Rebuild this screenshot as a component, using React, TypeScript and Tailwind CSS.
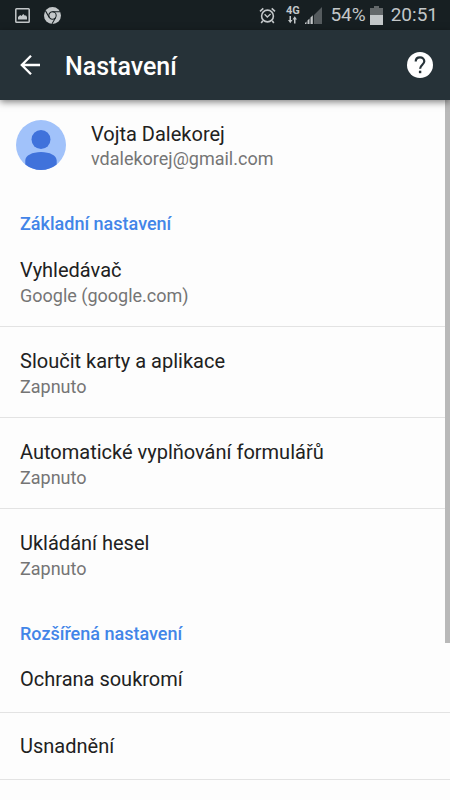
import type { ReactNode } from "react";

type Item = { title: string; value?: string };

const basicItems: Item[] = [
  { title: "Vyhledávač", value: "Google (google.com)" },
  { title: "Sloučit karty a aplikace", value: "Zapnuto" },
  { title: "Automatické vyplňování formulářů", value: "Zapnuto" },
  { title: "Ukládání hesel", value: "Zapnuto" },
];

const advancedItems: Item[] = [
  { title: "Ochrana soukromí" },
  { title: "Usnadnění" },
];

function StatusBar() {
  return (
    <div className="flex h-[30px] items-center bg-[#171f22] pl-[15px] pr-3 text-[19px] leading-[30px] text-[#c3c7c9]">
      <svg className="size-[15px]" viewBox="0 0 15 15" fill="none">
        <rect x="0.8" y="0.8" width="13.4" height="13.4" rx="0.8" stroke="currentColor" strokeWidth="1.500" />
        <path d="M3 11.500V9l2.200-2 1.300 1 1.700-2L10 7.800l.9-.6L12 9v2.500z" fill="currentColor" />
      </svg>
      <svg className="ml-[14px] size-[17px]" viewBox="0 0 18 18">
        <circle cx="9" cy="9" r="9" fill="#c3c7c9" />
        <g stroke="#171f22" strokeWidth="1.1" fill="none">
          <circle cx="9" cy="9" r="3.900" />
          <path d="M9 5.100h8.200M5.600 11 1.600 4.100M12.400 11 8.400 17.900" />
        </g>
      </svg>

      <svg className="ml-auto size-[17px]" viewBox="0 0 17 17" fill="none" stroke="currentColor" strokeWidth="1.6">
        <circle cx="8.500" cy="9" r="5.900" />
        <path d="M1 4.300 4.300 1.300M16 4.300l-3.300-3M3.800 13.800 2.200 16M13.200 13.800l1.600 2.200" />
        <path d="M5.600 7.200 8.300 10l3.300-3" strokeWidth="1.3" />
      </svg>
      <div className="ml-[9px] flex w-[15px] flex-col items-center">
        <span className="text-[11px] font-bold leading-[10px]">4G</span>
        <svg className="h-[8px] w-[9px]" viewBox="0 0 9 8" fill="currentColor">
          <path d="M1.500 0h1.500v4h1.500L2.250 7.200 0 4h1.500zM6 7.500h1.500v-4H9L6.750.3 4.500 3.500H6z" />
        </svg>
      </div>
      <svg className="ml-[5px] size-[17px]" viewBox="0 0 17 17">
        <path d="M9 8l8-8v17H9z" fill="#555b5e" />
        <path d="M0 17v-1l1.500-1.500V17zM2.500 17v-3.500L4.500 11.500V17zM5.500 17v-6.500L7.800 8.200V17z" fill="#c3c7c9" />
      </svg>
      <span className="ml-2">54%</span>
      <svg className="ml-[4px] h-[19px] w-[13px]" viewBox="0 0 13 19">
        <path d="M4 0h5v2h4v7H0V2h4z" fill="#63686a" />
        <path d="M0 9h13v10H0z" fill="#c3c7c9" />
      </svg>
      <span className="ml-2">20:51</span>
    </div>
  );
}

function Header() {
  return (
    <header className="relative z-10 flex h-[70px] items-center bg-[#263238] pl-5 pr-[17px] text-white shadow-[0_2px_7px_rgba(0,0,0,0.5)]">
      <button type="button" aria-label="Zpět">
        <svg className="size-5" viewBox="0 0 20 20" fill="none" stroke="currentColor" strokeWidth="2.300">
          <path d="M20 10H2M11 .8 1.800 10l9.200 9.200" />
        </svg>
      </button>
      <h1 className="ml-[25px] pt-1 text-[25px] font-medium leading-8">Nastavení</h1>
      <button type="button" aria-label="Nápověda" className="ml-auto">
        <svg className="size-[26px]" viewBox="0 0 26 26" fill="none">
          <circle cx="13" cy="13" r="13" fill="currentColor" />
          <path
            d="M8.700 9.600C8.700 7 10.500 5.300 13 5.300s4.300 1.700 4.300 4c0 3.300-4.200 3.600-4.200 7.500"
            stroke="#263238"
            strokeWidth="2.200"
          />
          <path d="M11.900 18.700h2.400v2.500h-2.400z" fill="#263238" />
        </svg>
      </button>
    </header>
  );
}

function Account() {
  return (
    <button type="button" className="flex w-full items-center px-4 py-5 text-left">
      <svg className="size-[50px]" viewBox="0 0 50 50">
        <circle cx="25" cy="25" r="25" fill="#a1c2fa" />
        <circle cx="25" cy="19.500" r="9.500" fill="#4072db" />
        <path d="M9.300 44.500v-4c0-5 7-8.500 15.700-8.500s15.700 3.500 15.700 8.500v4A25 25 0 0 1 25 50a25 25 0 0 1-15.700-5.500z" fill="#4072db" />
      </svg>
      <span className="ml-[25px] flex flex-col">
        <span className="text-[20px] leading-7 text-[#212121]">Vojta Dalekorej</span>
        <span className="text-[18px] leading-[22px] text-[#757575]">vdalekorej@gmail.com</span>
      </span>
    </button>
  );
}

function Section({ label, children }: { label: string; children: ReactNode }) {
  return (
    <section>
      <h2 className="px-5 pt-[22px] text-[18px] font-medium leading-6 text-[#4285e8]">{label}</h2>
      <ul>{children}</ul>
    </section>
  );
}

function Row({ title, value, divider }: Item & { divider: boolean }) {
  return (
    <li className={divider ? "border-b border-[#e3e3e3]" : "border-b border-transparent"}>
      <button
        type="button"
        className={
          value
            ? "flex w-full flex-col px-5 pb-[18px] pt-5 text-left"
            : "flex w-full flex-col px-5 py-[19px] text-left"
        }
      >
        <span className="text-[20px] leading-7 text-[#212121]">{title}</span>
        {value && <span className="text-[18px] leading-6 text-[#757575]">{value}</span>}
      </button>
    </li>
  );
}

export default function App() {
  return (
    <div className="flex min-h-screen flex-col bg-[#fdfdfd] font-['Roboto',sans-serif]">
      <StatusBar />
      <Header />
      <main className="relative flex-1">
        <Account />
        <Section label="Základní nastavení">
          {basicItems.map((item, i) => (
            <Row key={item.title} {...item} divider={i < basicItems.length - 1} />
          ))}
        </Section>
        <Section label="Rozšířená nastavení">
          {advancedItems.map((item) => (
            <Row key={item.title} {...item} divider />
          ))}
        </Section>
        <div className="absolute right-0 top-0 h-[77.5%] w-[5px] bg-[#b9b9b9]" />
      </main>
    </div>
  );
}
